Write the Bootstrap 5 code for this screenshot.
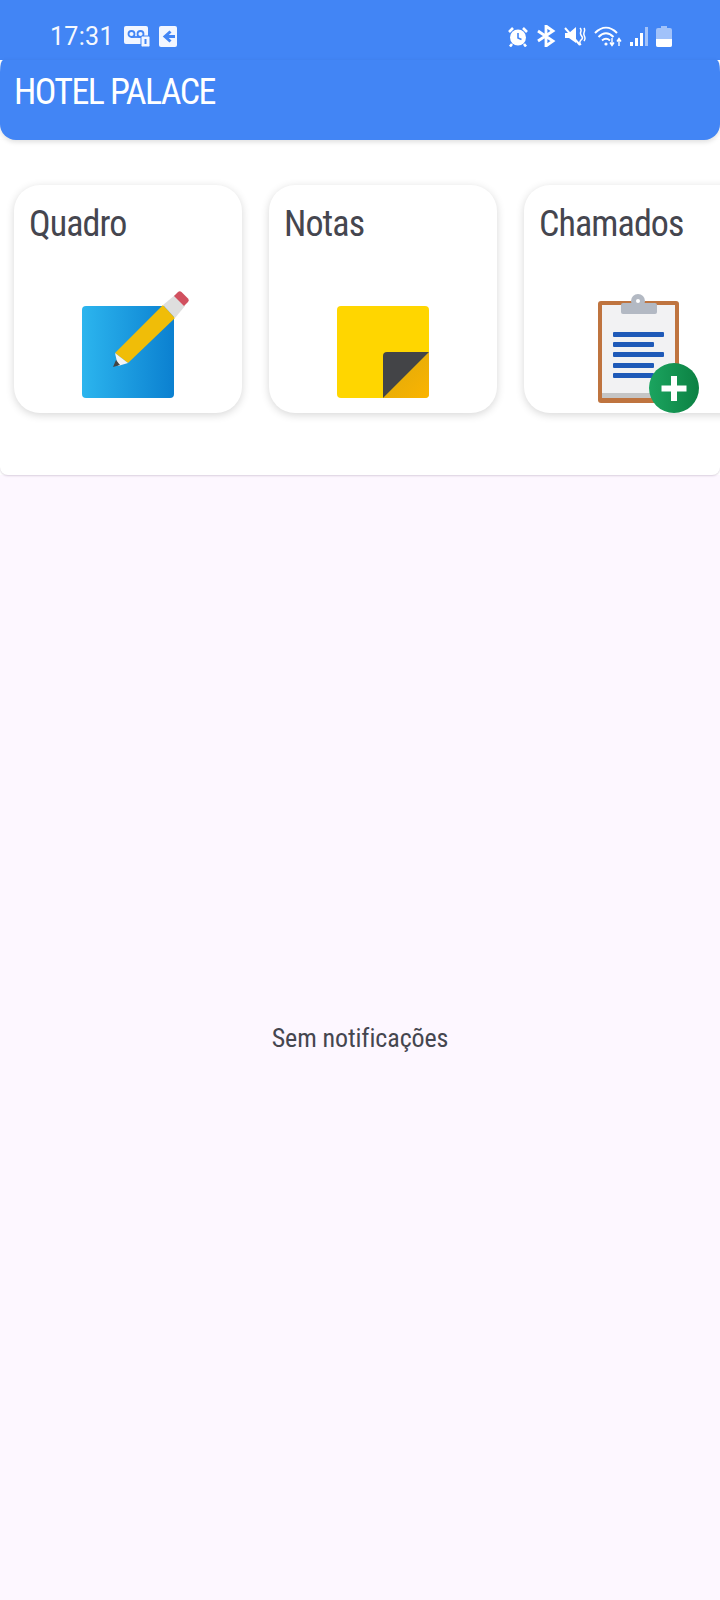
<!DOCTYPE html>
<html lang="pt"><head><meta charset="utf-8"><title>Hotel Palace</title>
<link href="https://cdn.jsdelivr.net/npm/bootstrap@5.3.0/dist/css/bootstrap.min.css" rel="stylesheet">
<style>
html,body{height:100%}
body{background:#fdf7ff;font-family:"Liberation Sans Narrow","Roboto Condensed",Roboto,sans-serif;color:#45464f;height:1600px;overflow:hidden}
.phone-bar{height:60px;background:#4285f5;padding:12px 48px 0 50px;color:#fff}
.clock{font-family:Roboto,sans-serif;font-size:25px;line-height:1;margin-right:10px;letter-spacing:.3px;opacity:.95}
.status-right{gap:8px}
.top-wrap{background:#fff}
.hotel-bar{height:80px;background:#4285f5;border-radius:3px 3px 16px 16px/12px 12px 16px 16px;padding:0 0 0 14px;box-shadow:0 2px 5px rgba(0,0,0,.13)}
.hotel-name{color:#fff;font-size:36px;line-height:1;margin:0;margin-top:-17px;font-weight:400;letter-spacing:-1.6px}
.shortcut-panel{background:#fff;height:335px;border-radius:0 0 8px 8px;box-shadow:0 1px 2px rgba(80,50,90,.2);padding:45px 0 0 14px;gap:27px;overflow:hidden}
.tile{flex:0 0 228px;height:228px;border-radius:26px;background:#fff;box-shadow:0 2px 8px rgba(0,0,0,.16);padding:14px 15px}
.tile-title{font-size:36px;line-height:44px;margin:3px 0 0;font-weight:400;color:#45464f;letter-spacing:-.9px}
.tile-art{display:block;position:absolute;left:44px;bottom:0}
.tile-art-shift{left:45px;overflow:visible}
.tile-body{position:relative;margin:-14px -15px;height:228px;padding:14px 15px}
.empty-note{height:1125px;font-size:26px;letter-spacing:-.1px}
.empty-note span{margin-top:1px}
</style></head>
<body>
<div class="phone-bar d-flex align-items-center justify-content-between">
  <div class="d-flex align-items-center">
    <span class="clock">17:31</span>
    <svg width="27" height="22" viewBox="0 0 27 22" class="me-2"><rect x="0" y="1" width="24" height="18" rx="2" fill="#f2f6ff"/><circle cx="7.5" cy="9" r="3" fill="none" stroke="#4285f5" stroke-width="1.8"/><circle cx="16.5" cy="9" r="3" fill="none" stroke="#4285f5" stroke-width="1.8"/><path d="M7.5 12h9" stroke="#4285f5" stroke-width="1.8"/><rect x="17" y="11" width="9" height="11" rx="1.5" fill="#f2f6ff" stroke="#4285f5"/><rect x="20.5" y="14" width="2" height="5" fill="#4285f5"/></svg>
    <svg width="18" height="21" viewBox="0 0 18 21"><rect width="18" height="21" rx="2" fill="#f2f6ff"/><path d="M16 10.500H7M11.500 5.500 6 10.500l5.500 5" fill="none" stroke="#4285f5" stroke-width="3"/></svg>
  </div>
  <div class="status-right d-flex align-items-center">
    <svg width="20" height="21" viewBox="0 0 20 21"><circle cx="10" cy="11.500" r="8" fill="#fff"/><path d="M10 7v5l3.500 1.500" fill="none" stroke="#4285f5" stroke-width="1.600"/><path d="M1 6 5 2M19 6 15 2M4 18l-2 2.500M16 18l2 2.500" stroke="#fff" stroke-width="2.600"/></svg>
    <svg width="20" height="22" viewBox="0 0 20 22"><path d="M2 6l15 10-7 5V1l7 5L2 16" fill="none" stroke="#fff" stroke-width="2.800"/></svg>
    <svg width="22" height="21" viewBox="0 0 22 21"><path d="M1 7h4l7-6v16l-7-5H1z" fill="#fff"/><path d="M1 2l15 17" stroke="#fff" stroke-width="2"/><path d="M16 2c3 3-1 4 1 7s2 3 0 5-1 4 0 5M20 2c2 3-1 4 0 7s2 3 0 6" fill="none" stroke="#fff" stroke-width="1.500"/></svg>
    <svg width="28" height="21" viewBox="0 0 28 21"><path d="M1 7c7-7 15-7 22 0M4.500 11c5-5 10-5 15 0M8 14.500c3-2.500 5-2.500 8 0" fill="none" stroke="#fff" stroke-width="2"/><circle cx="12" cy="18" r="1.600" fill="#fff"/><path d="M18 12v7m-2-2.500 2 3 2-3M25 20v-7m-2 2.500 2-3 2 3" fill="none" stroke="#fff" stroke-width="1.400"/></svg>
    <svg width="18" height="21" viewBox="0 0 18 21"><rect x="0" y="16" width="3" height="4" fill="#fff"/><rect x="5" y="12" width="3" height="8" fill="#fff"/><rect x="10" y="7" width="3" height="13" fill="#fff"/><rect x="15" y="1" width="3" height="19" fill="#fff" opacity=".5"/></svg>
    <svg width="16" height="21" viewBox="0 0 16 21"><path d="M5 0h6v2h3a2 2 0 0 1 2 2v15a2 2 0 0 1-2 2H2a2 2 0 0 1-2-2V4a2 2 0 0 1 2-2h3z" fill="#fff" opacity=".5"/><path d="M0 13h16v6a2 2 0 0 1-2 2H2a2 2 0 0 1-2-2z" fill="#fff"/></svg>
  </div>
</div>
<div class="top-wrap">
  <nav class="hotel-bar navbar d-flex align-items-center"><h1 class="hotel-name">HOTEL PALACE</h1></nav>
  <div class="shortcut-panel d-flex">
    <div class="tile"><div class="tile-body">
      <p class="tile-title">Quadro</p>
      <svg class="tile-art" width="140" height="128" viewBox="0 0 140 128"><defs><linearGradient id="bl"><stop offset="0" stop-color="#2cb5ee"/><stop offset="1" stop-color="#0b80d0"/></linearGradient></defs>
        <rect x="24" y="21" width="92" height="92" rx="4" fill="url(#bl)"/>
        <path d="M57 68 105 20 117 33 70 78z" fill="#f0bd08"/>
        <path d="M105 20 117 10 127 21 117 33z" fill="#dedede"/>
        <path d="M116 11 120 7a2.500 2.500 0 0 1 3.500 0l6.500 6.500a2.500 2.500 0 0 1 0 3.500l-4 4z" fill="#d1505f"/>
        <path d="M57 68 70 78 60 81z" fill="#f4f4f4"/>
        <path d="M58 75 62 80 55 82z" fill="#444"/></svg>
    </div></div>
    <div class="tile"><div class="tile-body">
      <p class="tile-title">Notas</p>
      <svg class="tile-art" width="140" height="128" viewBox="0 0 140 128"><defs><linearGradient id="or" x1="0" y1="0" x2="1" y2="1"><stop offset=".4" stop-color="#e8ad08"/><stop offset="1" stop-color="#fbb400"/></linearGradient></defs>
        <rect x="24" y="21" width="92" height="92" rx="4" fill="#ffd600"/>
        <path d="M116 67V109a4 4 0 0 1-4 4H70z" fill="url(#or)"/>
        <path d="M70 113V71a4 4 0 0 1 4-4H116z" fill="#434447"/></svg>
    </div></div>
    <div class="tile"><div class="tile-body">
      <p class="tile-title">Chamados</p>
      <svg class="tile-art tile-art-shift" width="140" height="128" viewBox="0 0 140 128"><defs><linearGradient id="gr"><stop offset="0" stop-color="#1ba45f"/><stop offset="1" stop-color="#0c8143"/></linearGradient></defs>
        <rect x="29" y="16" width="81" height="102" rx="3" fill="#bf743f"/>
        <rect x="33" y="20" width="73" height="92" fill="#f2f2f3"/>
        <rect x="33" y="108" width="73" height="5" fill="#c5c5c5"/>
        <circle cx="69" cy="16" r="7" fill="#b3b9c3"/><rect x="52" y="18" width="36" height="11" rx="2" fill="#b3b9c3"/><circle cx="69" cy="16" r="2" fill="#fff"/>
        <g fill="#1f5ab8"><rect x="44" y="47" width="51" height="5" rx="1"/><rect x="44" y="57" width="41" height="5" rx="1"/><rect x="44" y="67" width="51" height="5" rx="1"/><rect x="44" y="78" width="41" height="5" rx="1"/><rect x="44" y="88" width="41" height="5" rx="1"/></g>
        <circle cx="105" cy="103" r="25" fill="url(#gr)"/>
        <path d="M105 91v25M92.500 103.500h25" stroke="#fff" stroke-width="6"/></svg>
    </div></div>
  </div>
</div>
<div class="empty-note d-flex align-items-center justify-content-center"><span>Sem notificações</span></div>
<script src="https://cdn.jsdelivr.net/npm/bootstrap@5.3.0/dist/js/bootstrap.bundle.min.js"></script>
</body></html>
